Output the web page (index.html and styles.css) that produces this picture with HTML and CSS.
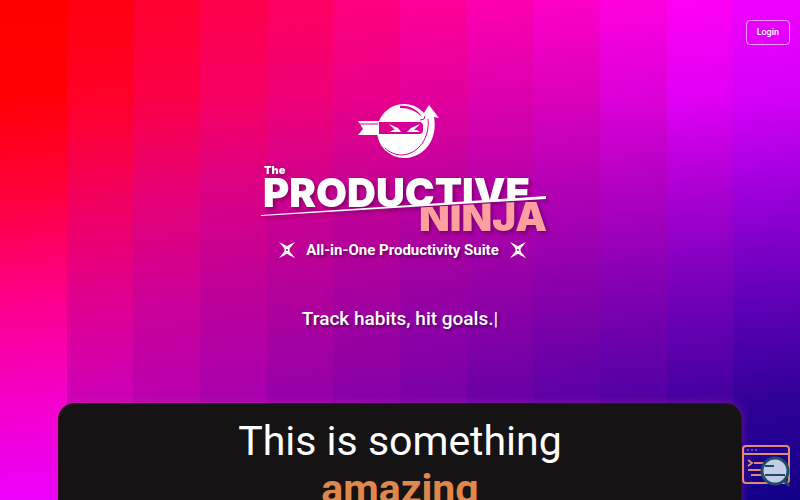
FILE: index.html
```html
<!DOCTYPE html>
<html lang="en">
<head>
  <meta charset="UTF-8">
  <meta name="viewport" content="width=device-width, initial-scale=1.0">
  <title>The Productive Ninja</title>
  <link rel="stylesheet" href="styles.css">
</head>
<body>
  <div class="stripes" aria-hidden="true">
    <span></span><span></span><span></span><span></span><span></span><span></span>
    <span></span><span></span><span></span><span></span><span></span><span></span>
  </div>

  <header class="topbar">
    <button type="button" class="login">Login</button>
  </header>

  <main>
    <section class="hero">
      <svg class="logo" viewBox="0 0 290 136" role="img" aria-label="The Productive Ninja">
        <defs>
          <clipPath id="above"><path d="M0 0H290V95L0 114Z"/></clipPath>
          <clipPath id="below"><path d="M150 106L290 98V136H150Z"/></clipPath>
          <mask id="cuts">
            <rect width="290" height="136" fill="#fff"/>
            <!-- mask band -->
            <path d="M118 20h40q4 0 4 4v4q0 4-4 4h-40z" fill="#000"/>
            <!-- highlight and arrow gap -->
            <path d="M139 4c9-1 17 3 22 11-6-6-13-9-22-9z" fill="#000"/>
            <path d="M97 22h20M159 18l4-1 1-3M167 17c2 18-9 35-26 36-7 0-13-3-17-7" fill="none" stroke="#000"/>
          </mask>
        </defs>
        <!-- ninja head -->
        <g fill="#fff">
          <g mask="url(#cuts)">
            <circle cx="143" cy="29" r="27"/>
            <path d="M97 19h21v14h-21l5-6z"/>
            <path d="M168 3l10 13-5-1c4 22-9 41-31 41v-8l20-32-3 1z"/>
          </g>
          <path d="M128 22l9 4 3 4h-11l3-2h2zM159 22l-9 4-4 4h13l-3-2h-3z"/>
        </g>
        <!-- wordmark -->
        <g class="wordmark">
          <text x="3" y="72" class="the">The</text>
          <g clip-path="url(#above)"><text x="2" y="105" class="word">PRODUCTIVE</text></g>
          <g clip-path="url(#below)"><text x="158" y="129" class="word ninja">NINJA</text></g>
          <path d="M0 113L285 94V97L0 114Z" fill="#fff"/>
        </g>
      </svg>

      <div class="tagline">
        <svg class="star" viewBox="0 0 18 18"><path d="M1 1l6 3q2 2 4 0l6-3-5 6q-1 2 0 4l5 6-6-3q-2-2-4 0l-6 3 5-6q1-2 0-4z" fill="#fff"/><circle cx="9" cy="9" r="1" fill="#b1009b"/></svg>
        <span>All-in-One Productivity Suite</span>
        <svg class="star" viewBox="0 0 18 18"><path d="M1 1l6 3q2 2 4 0l6-3-5 6q-1 2 0 4l5 6-6-3q-2-2-4 0l-6 3 5-6q1-2 0-4z" fill="#fff"/><circle cx="9" cy="9" r="1" fill="#9800a5"/></svg>
      </div>

      <p class="typed">Track habits, hit goals.<span class="caret">|</span></p>
    </section>

    <section class="card">
      <h1>This is something <strong>amazing</strong></h1>
    </section>
  </main>

  <button type="button" class="inspect" aria-label="Inspect">
    <svg viewBox="0 0 50 44">
      <g fill="none" stroke="#dc8c72" stroke-width="2">
        <rect x="2" y="2" width="46" height="37" rx="3"/>
        <path d="M2 10h46"/>
        <path d="M6 6h2M10 6h2M14 6h2" stroke="#b98fc0" stroke-width="1"/>
        <path d="M7 16l4 3-4 3M13 19h10M7 26h13M10 31h12"/>
      </g>
      <path d="M42 35l6 7" stroke="#1e4c64" stroke-width="3"/>
      <circle cx="34" cy="27" r="13" fill="#c3cde8" stroke="#1e4c64" stroke-width="3"/>
      <path d="M24 22h9M24 31h20" stroke="#1e4c64" stroke-width="2"/>
    </svg>
  </button>
</body>
</html>
```

FILE: styles.css
```css
* {
  box-sizing: border-box;
}

body {
  margin: 0;
  height: 100vh;
  overflow: hidden;
  font-family: Roboto, sans-serif;
  color: #fff;
  background: #b000a0;
}

/* striped background */
.stripes {
  position: absolute;
  inset: 0;
  z-index: -1;
  display: grid;
  grid-template-columns: repeat(12, 1fr);
}

.stripes span:nth-child(1) { background: linear-gradient(174deg, #ff0000, #ff0008 20%, #ff0040 40%, #fc008c 60%, #f400cc 80%, #ec00ff); }
.stripes span:nth-child(2) { background: linear-gradient(174deg, #ff0010, #ff0028 20%, #f20060 40%, #e00090 60%, #cc00b8 80%, #b800d0); }
.stripes span:nth-child(3) { background: linear-gradient(174deg, #ff002c, #fc0048 20%, #e40078 40%, #cc0098 60%, #b800b0 80%, #a000c0); }
.stripes span:nth-child(4) { background: linear-gradient(174deg, #ff0048, #f60064 20%, #d80088 40%, #bc009a 60%, #a800b0 80%, #9000b8); }
.stripes span:nth-child(5) { background: linear-gradient(174deg, #ff0060, #f00078 20%, #cc0090 40%, #b0009c 60%, #9400aa 80%, #7c00b0); }
.stripes span:nth-child(6) { background: linear-gradient(174deg, #ff007c, #e8008a 20%, #c20096 40%, #a400a0 60%, #8600a8 80%, #6c00ac); }
.stripes span:nth-child(7) { background: linear-gradient(174deg, #ff0098, #e2009c 20%, #b8009e 40%, #9600a4 60%, #7800a8 80%, #5c00a8); }
.stripes span:nth-child(8) { background: linear-gradient(174deg, #ff00b0, #dc00ac 20%, #b400aa 40%, #8e00a6 60%, #6800a6 80%, #4c00a4); }
.stripes span:nth-child(9) { background: linear-gradient(174deg, #ff00c8, #da00bc 20%, #ae00b4 40%, #8400aa 60%, #5a00a6 80%, #3c00a0); }
.stripes span:nth-child(10) { background: linear-gradient(174deg, #ff00e0, #dc00d8 20%, #ac00c0 40%, #7c00b0 60%, #5000a4 80%, #2c0098); }
.stripes span:nth-child(11) { background: linear-gradient(174deg, #ff00f4, #e000f4 20%, #a600d0 40%, #7000b6 60%, #4200a0 80%, #1c0090); }
.stripes span:nth-child(12) { background: linear-gradient(174deg, #f000ff, #d400f8 20%, #9800d8 40%, #6000b6 60%, #300098 80%, #100088); }

.topbar {
  display: flex;
  justify-content: flex-end;
  padding: 20px 10px 0;
}

.login {
  padding: 4px 10px;
  border: 1px solid rgba(255, 255, 255, 0.6);
  border-radius: 4px;
  background: transparent;
  color: #fff;
  font: 500 9px/15px Roboto, sans-serif;
  cursor: pointer;
}

.hero {
  display: flex;
  flex-direction: column;
  align-items: center;
  padding-top: 57px;
  text-shadow: 2px 2px 3px rgba(0, 0, 0, 0.4);
}

.logo {
  width: 290px;
  height: 136px;
  margin-left: 12px;
  text-shadow: none;
}

.wordmark {
  font-family: Inter, sans-serif;
  font-weight: 900;
  fill: #fff;
  filter: drop-shadow(2px 2px 2px rgba(0, 0, 0, 0.35));
}

.the {
  font-size: 11px;
}

.word {
  font-size: 40px;
}

.ninja {
  fill: #ff9f9f;
}

.tagline {
  display: flex;
  align-items: center;
  gap: 10px;
  margin-left: 5px;
  font-size: 15px;
  font-weight: 700;
  line-height: 24px;
}

.star {
  width: 18px;
  height: 18px;
}

.typed {
  margin: 44px 0 0;
  font-size: 19px;
  font-weight: 500;
  line-height: 26px;
}

.caret {
  font-weight: 400;
}

.card {
  margin: 71px 58px 0;
  min-height: 300px;
  padding: 13px 100px;
  border: 1px solid #331020;
  border-radius: 16px;
  background: #151313;
  box-shadow: 0 0 10px rgba(200, 60, 150, 0.4);
}

.card h1 {
  margin: 0;
  font-size: 41px;
  font-weight: 400;
  line-height: 48px;
  text-align: center;
}

.card strong {
  display: block;
  color: #e0884c;
}

.inspect {
  position: fixed;
  right: 9px;
  bottom: 12px;
  width: 50px;
  height: 44px;
  padding: 0;
  border: 0;
  background: none;
  cursor: pointer;
}

.inspect svg {
  display: block;
}
```
